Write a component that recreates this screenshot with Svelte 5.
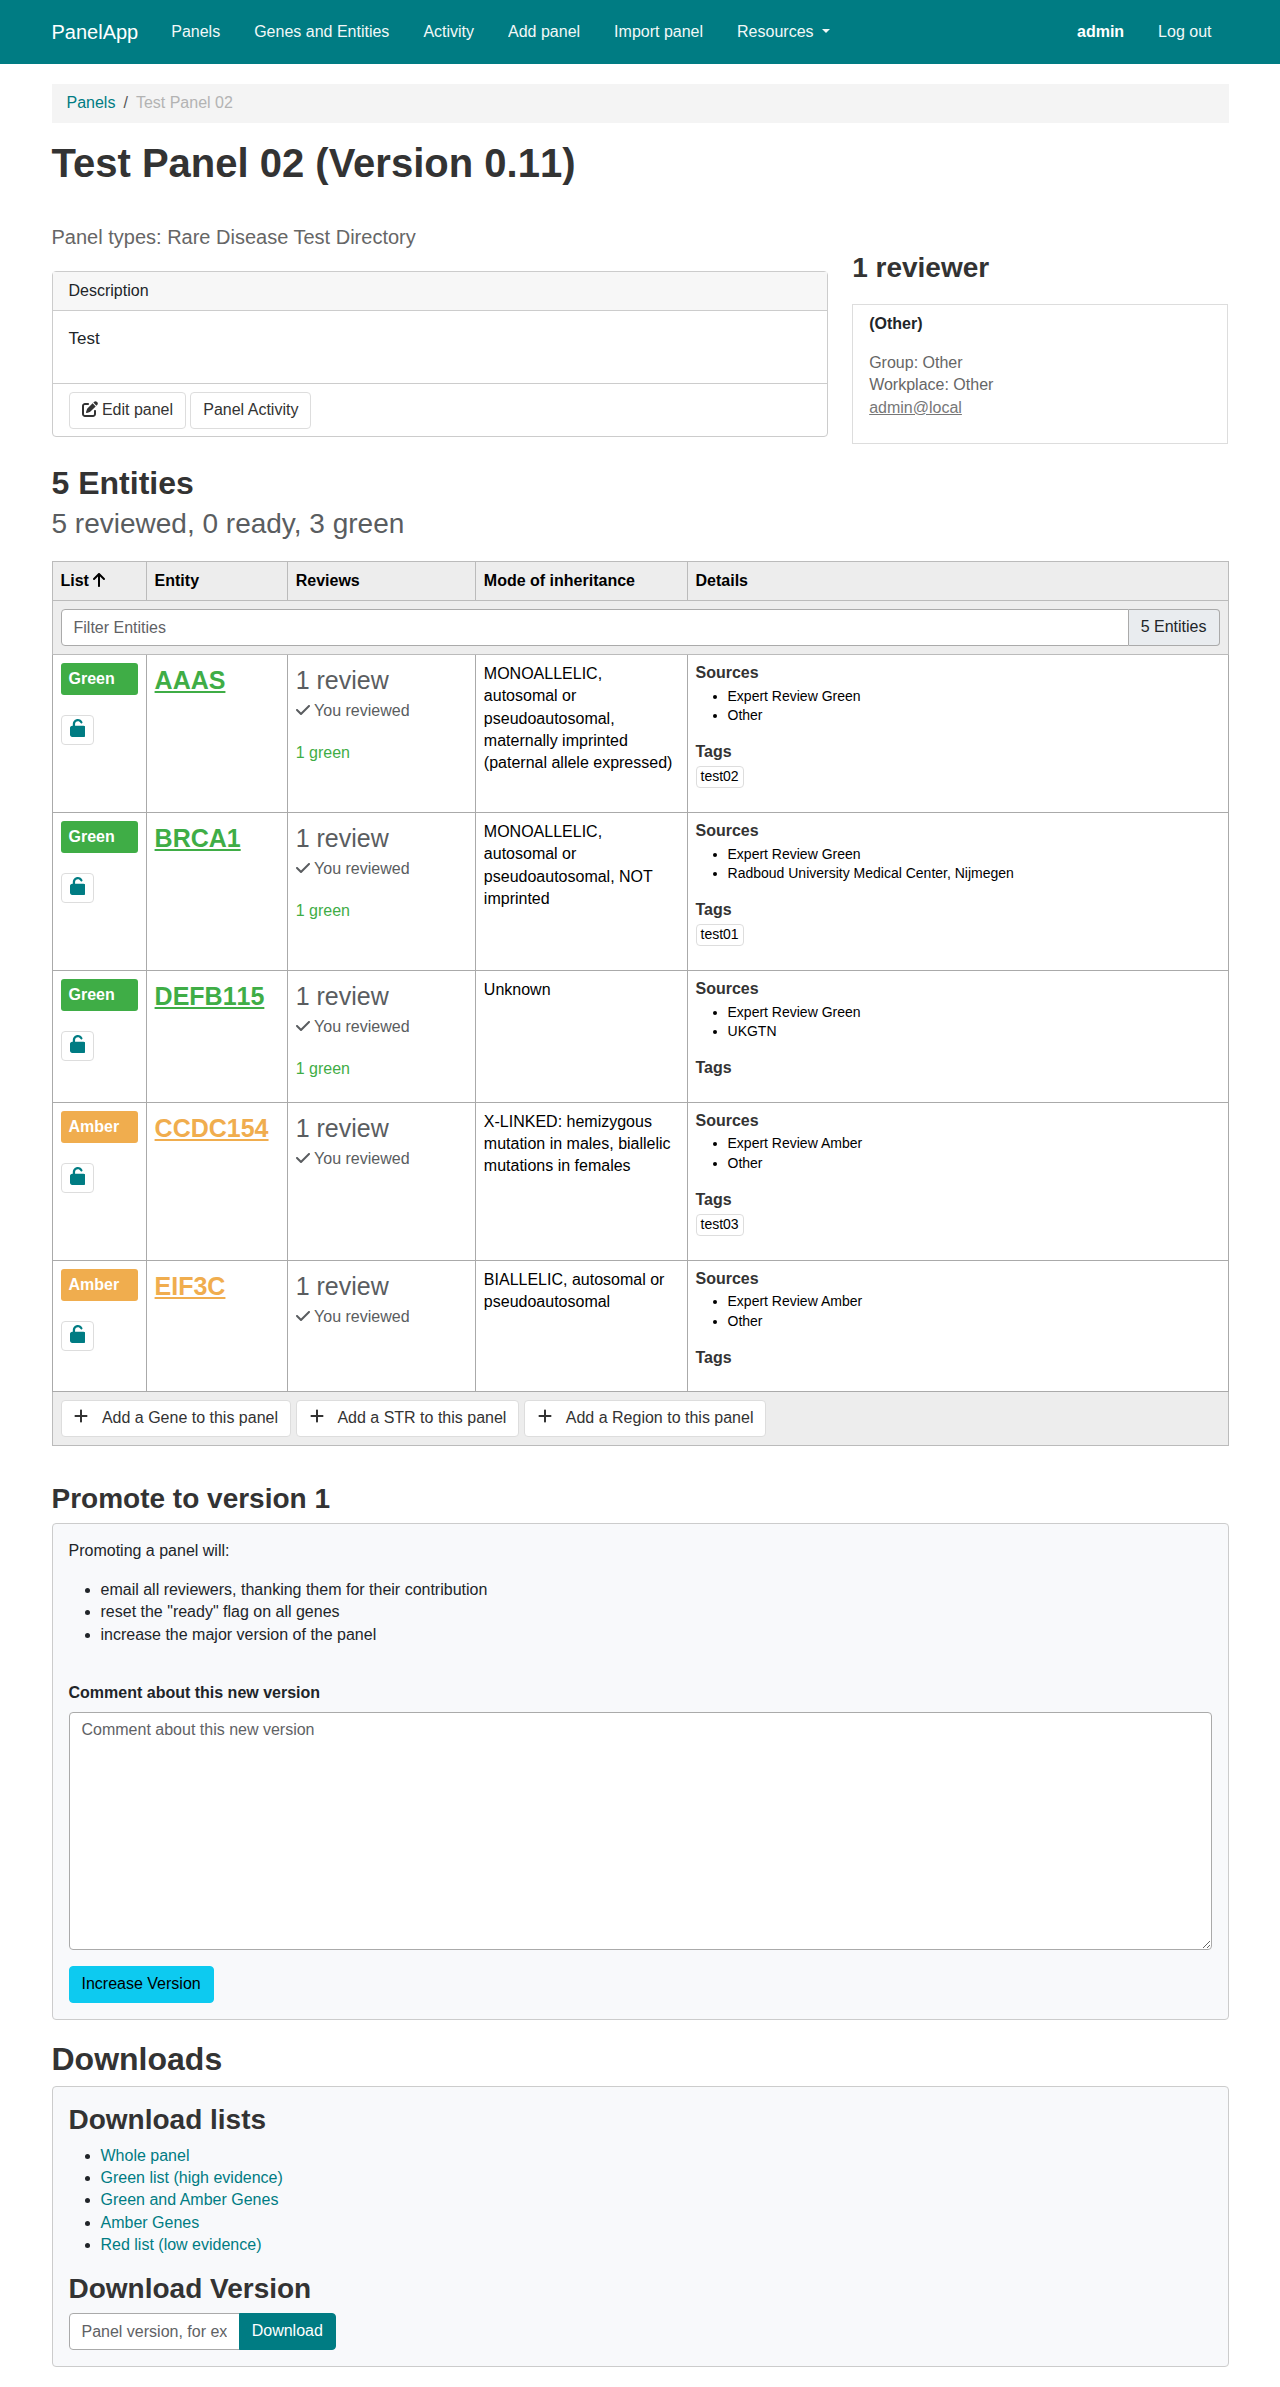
<script>
  const icons = {
    edit: {
      w: 512,
      d: 'M471.6 21.7c-21.9-21.9-57.3-21.9-79.2 0L362.3 51.7l97.9 97.9 30.1-30.1c21.9-21.9 21.9-57.3 0-79.2L471.6 21.7zm-299.2 220c-6.1 6.1-10.8 13.6-13.5 21.9l-29.6 88.8c-2.9 8.6-.6 18.1 5.8 24.6s15.9 8.7 24.6 5.8l88.8-29.6c8.2-2.7 15.7-7.4 21.9-13.5L437.7 172.3 339.7 74.3 172.4 241.7zM96 64C43 64 0 107 0 160V416c0 53 43 96 96 96H352c53 0 96-43 96-96V320c0-17.7-14.3-32-32-32s-32 14.3-32 32v96c0 17.7-14.3 32-32 32H96c-17.7 0-32-14.3-32-32V160c0-17.7 14.3-32 32-32h96c17.7 0 32-14.3 32-32s-14.3-32-32-32H96z',
    },
    unlock: {
      w: 448,
      d: 'M144 144c0-44.2 35.8-80 80-80c31.9 0 59.4 18.6 72.3 45.7c7.6 16 26.7 22.8 42.6 15.2s22.8-26.7 15.2-42.6C331 33.7 281.5 0 224 0C144.5 0 80 64.5 80 144v48H64c-35.3 0-64 28.7-64 64V448c0 35.3 28.7 64 64 64H384c35.3 0 64-28.7 64-64V256c0-35.3-28.7-64-64-64H144V144z',
    },
    up: {
      w: 384,
      d: 'M214.6 41.4c-12.5-12.5-32.8-12.5-45.3 0l-160 160c-12.5 12.5-12.5 32.8 0 45.3s32.8 12.5 45.3 0L160 141.2V448c0 17.7 14.3 32 32 32s32-14.3 32-32V141.2L329.4 246.6c12.5 12.5 32.8 12.5 45.3 0s12.5-32.8 0-45.3l-160-160z',
    },
    check: {
      w: 448,
      d: 'M438.6 105.4c12.5 12.5 12.5 32.8 0 45.3l-256 256c-12.5 12.5-32.8 12.5-45.3 0l-128-128c-12.5-12.5-12.5-32.8 0-45.3s32.8-12.5 45.3 0L160 338.7 393.4 105.4c12.5-12.5 32.8-12.5 45.3 0z',
    },
    plus: {
      w: 448,
      d: 'M256 80c0-17.7-14.3-32-32-32s-32 14.3-32 32V224H48c-17.7 0-32 14.3-32 32s14.3 32 32 32H192V432c0 17.7 14.3 32 32 32s32-14.3 32-32V288H400c17.7 0 32-14.3 32-32s-14.3-32-32-32H256V80z',
    },
  };

  const nav = ['Panels', 'Genes and Entities', 'Activity', 'Add panel', 'Import panel'];

  const entities = [
    { level: 'Green', name: 'AAAS', green: 1, mode: 'MONOALLELIC, autosomal or pseudoautosomal, maternally imprinted (paternal allele expressed)', sources: ['Expert Review Green', 'Other'], tags: ['test02'] },
    { level: 'Green', name: 'BRCA1', green: 1, mode: 'MONOALLELIC, autosomal or pseudoautosomal, NOT imprinted', sources: ['Expert Review Green', 'Radboud University Medical Center, Nijmegen'], tags: ['test01'] },
    { level: 'Green', name: 'DEFB115', green: 1, mode: 'Unknown', sources: ['Expert Review Green', 'UKGTN'], tags: [] },
    { level: 'Amber', name: 'CCDC154', green: 0, mode: 'X-LINKED: hemizygous mutation in males, biallelic mutations in females', sources: ['Expert Review Amber', 'Other'], tags: ['test03'] },
    { level: 'Amber', name: 'EIF3C', green: 0, mode: 'BIALLELIC, autosomal or pseudoautosomal', sources: ['Expert Review Amber', 'Other'], tags: [] },
  ];

  const addable = ['Gene', 'STR', 'Region'];
  const downloads = ['Whole panel', 'Green list (high evidence)', 'Green and Amber Genes', 'Amber Genes', 'Red list (low evidence)'];
</script>

{#snippet icon(name)}
  <svg class="icon {name}" viewBox="0 0 {icons[name].w} 512" aria-hidden="true"><path d={icons[name].d} /></svg>
{/snippet}

<nav class="navbar">
  <a class="brand" href="#top">PanelApp</a>
  {#each nav as item}<a class="link" href="#nav">{item}</a>{/each}
  <a class="link" href="#nav">Resources<span class="caret"></span></a>
  <a class="link user" href="#nav"><b>admin</b></a>
  <a class="link" href="#nav">Log out</a>
</nav>

<main class="container">
  <div class="breadcrumb">
    <a href="#panels">Panels</a><span class="sep">/</span><span class="current">Test Panel 02</span>
  </div>

  <h1>Test Panel 02 (Version <span class="digits">0.11</span>)</h1>

  <div class="overview">
    <div class="about">
      <p class="types">Panel types: Rare Disease Test Directory</p>
      <div class="card">
        <div class="card-header">Description</div>
        <div class="card-body"><p>Test</p></div>
        <div class="card-footer">
          <button class="btn edit-btn">{@render icon('edit')}Edit panel</button>
          <button class="btn">Panel Activity</button>
        </div>
      </div>
    </div>
    <aside class="reviewers">
      <h3>1 reviewer</h3>
      <div class="reviewer">
        <b>(Other)</b>
        <p>Group: Other<br />Workplace: Other<br /><a href="#mail">admin@local</a></p>
      </div>
    </aside>
  </div>

  <h2 class="entities-title">5 Entities</h2>
  <p class="summary">5 reviewed, 0 ready, 3 green</p>

  <table>
    <colgroup><col class="c1" /><col class="c2" /><col class="c3" /><col class="c4" /><col /></colgroup>
    <thead>
      <tr>
        <th>List {@render icon('up')}</th>
        <th>Entity</th>
        <th>Reviews</th>
        <th>Mode of inheritance</th>
        <th>Details</th>
      </tr>
      <tr>
        <td colspan="5">
          <div class="group">
            <input class="field" placeholder="Filter Entities" aria-label="Filter Entities" />
            <span class="addon">5 Entities</span>
          </div>
        </td>
      </tr>
    </thead>
    <tbody>
      {#each entities as e}
        <tr class:tagged={e.tags.length > 0}>
          <td>
            <span class="badge {e.level.toLowerCase()}">{e.level}</span>
            <button class="btn lock" aria-label="Unlock">{@render icon('unlock')}</button>
          </td>
          <td><a class="entity digits {e.level.toLowerCase()}" href="#entity">{e.name}</a></td>
          <td class="reviews">
            <div class="count">1 review</div>
            <div class="mine">{@render icon('check')}You reviewed</div>
            {#if e.green}<div class="votes">{e.green} green</div>{/if}
          </td>
          <td>{e.mode}</td>
          <td class="details">
            <h6>Sources</h6>
            <ul>{#each e.sources as s}<li>{s}</li>{/each}</ul>
            <h6>Tags</h6>
            {#each e.tags as t}<span class="tag">{t}</span>{/each}
          </td>
        </tr>
      {/each}
    </tbody>
    <tfoot>
      <tr>
        <td colspan="5">
          <div class="actions">
            {#each addable as kind}<button class="btn add">{@render icon('plus')}Add a {kind} to this panel</button>{/each}
          </div>
        </td>
      </tr>
    </tfoot>
  </table>

  <h3 class="promote-title">Promote to version 1</h3>
  <section class="well promote">
    <p>Promoting a panel will:</p>
    <ul>
      <li>email all reviewers, thanking them for their contribution</li>
      <li>reset the "ready" flag on all genes</li>
      <li>increase the major version of the panel</li>
    </ul>
    <label for="comment">Comment about this new version</label>
    <textarea id="comment" placeholder="Comment about this new version"></textarea>
    <button class="btn info">Increase Version</button>
  </section>

  <h2 class="downloads-title">Downloads</h2>
  <section class="well downloads">
    <h3>Download lists</h3>
    <ul>{#each downloads as d}<li><a href="#download">{d}</a></li>{/each}</ul>
    <h3>Download Version</h3>
    <div class="group version">
      <input class="field" placeholder="Panel version, for example" aria-label="Panel version" />
      <button class="btn primary">Download</button>
    </div>
  </section>
</main>

<style>
  :global(body) {
    margin: 0;
    background: #fff;
    color: #212529;
    font: 16px/1.4 "Liberation Sans", Arial, sans-serif;
  }
  :global(*) { box-sizing: border-box; }
  a { color: #007c83; text-decoration: none; }
  p, ul, h1, h2, h3, h6 { margin: 0; }
  h1, h2, h3, h6 { color: #333; line-height: 1.2; font-weight: 700; }
  h1 { font-size: 40px; margin-top: 16px; }
  h2 { font-size: 32px; }
  h3 { font-size: 28px; }
  h6 { font-size: 16px; }
  ul { padding-left: 32px; }
  button, input, textarea { font: inherit; margin: 0; }
  .digits { font-kerning: none; }

  .icon { height: 16px; fill: currentColor; vertical-align: -2px; }
  .icon.edit { width: 16px; margin-right: 4.4px; }
  .icon.up { width: 12px; }
  .icon.check { width: 14px; margin-right: 4.4px; }
  .icon.plus { width: 14px; margin: 0 13.9px 0 0.5px; vertical-align: -1px; }
  .icon.unlock { width: 15.75px; height: 18px; }

  .navbar {
    display: flex;
    align-items: center;
    height: 64px;
    padding: 0 51.5px;
    background: #007c83;
  }
  .navbar a { color: #fff; }
  .brand { font-size: 20px; margin-right: 16px; }
  .link { padding: 0 17px; opacity: 0.95; }
  .user { margin-left: auto; opacity: 1; }
  .caret {
    display: inline-block;
    margin-left: 8px;
    vertical-align: 4px;
    border: 4.5px solid transparent;
    border-top-color: #fff;
    border-bottom: 0;
  }

  .container { padding: 20px 51.5px; }
  .breadcrumb { height: 39px; padding: 7.5px 15px; background: #f4f4f4; }
  .sep { padding: 0 8px; color: #555; }
  .current { color: #b3b3b3; }

  .overview { display: flex; gap: 24px; margin-top: 36px; }
  .about { width: 776.67px; }
  .types { color: #666; font-size: 20px; line-height: 28px; }
  .card { margin-top: 20px; border: 1px solid #ccc; border-radius: 4px; }
  .card-header { padding: 8px 16px; background: #f7f7f7; border-bottom: 1px solid #ccc; }
  .card-body { padding: 16px; font-size: 17px; }
  .card-body p { margin-bottom: 16px; }
  .card-footer { display: flex; gap: 4.2px; padding: 8px 16px 7.2px; border-top: 1px solid #ccc; }

  .btn {
    padding: 6px 12px;
    border: 1px solid #ddd;
    border-radius: 4px;
    background: #fff;
    color: #333;
    white-space: nowrap;
  }

  .reviewers { flex: 0 0 375.8px; padding-top: 28px; }
  .reviewers h3 { line-height: 33.6px; }
  .reviewer { margin-top: 19.4px; height: 140px; padding: 8px 16px; border: 1px solid #ddd; }
  .reviewer b { display: block; }
  .reviewer p { margin-top: 16.6px; color: #666; }
  .reviewer a { color: #777; text-decoration: underline; }

  .entities-title { margin-top: 20px; }
  .summary { margin-top: 1.5px; color: #5a5d60; font-size: 28px; line-height: 39.2px; }

  table {
    width: 100%;
    margin-top: 18px;
    border-collapse: collapse;
    table-layout: fixed;
    color: #000;
  }
  .c1 { width: 8%; }
  .c2 { width: 12%; }
  .c3 { width: 16%; }
  .c4 { width: 18%; }
  th, td { padding: 8px; border: 1px solid #aaa; text-align: left; vertical-align: top; }
  thead th, thead td, tfoot td { background: #ededed; border-color: #bbb; }
  th { font-weight: 700; }
  tbody tr { height: 131.8px; }
  tbody tr.tagged { height: 158px; }

  .group { display: flex; }
  .field {
    flex: 1;
    min-width: 0;
    height: 36.4px;
    padding: 6px 12px;
    border: 1px solid #aaa;
    border-radius: 4px 0 0 4px;
    background: #fff;
  }
  .field::placeholder, textarea::placeholder { color: #5f6265; opacity: 1; }
  .addon {
    padding: 6px 12px;
    border: 1px solid #aaa;
    border-left: 0;
    border-radius: 0 4px 4px 0;
    background: #e9ecef;
    color: #212529;
    white-space: nowrap;
  }

  .badge {
    display: block;
    height: 32px;
    padding: 0 8px;
    border-radius: 3px;
    color: #fff;
    font-weight: 700;
    line-height: 31px;
  }
  .badge.green { background: #3fad46; }
  .badge.amber { background: #f0ad4e; }
  .lock {
    display: flex;
    justify-content: center;
    width: 33.75px;
    height: 30px;
    margin-top: 20px;
    padding: 3.5px 0 0;
    color: #007c83;
  }
  .entity { font-size: 25px; font-weight: 700; text-decoration: underline; line-height: 35px; }
  .entity.green, .votes { color: #3fad46; }
  .entity.amber { color: #f0ad4e; }
  .count { color: #5a5d60; font-size: 25px; line-height: 35px; }
  .mine { margin-top: 2.4px; color: #5a5d60; }
  .votes { margin-top: 19.8px; }
  .details ul { margin: 4.5px 0 16.3px; font-size: 14px; }
  .tag {
    display: inline-block;
    margin-top: 5px;
    padding: 0 4px;
    border: 1px solid #ddd;
    border-radius: 4px;
    font-size: 14px;
    vertical-align: top;
  }
  .actions { display: flex; gap: 5px; }

  .well { padding: 16px; border: 1px solid #ccc; border-radius: 4px; background: #f8f9fb; }
  .promote-title { margin-top: 36px; }
  .promote { margin-top: 8px; height: 497px; }
  .promote ul { margin: 16px 0 36px; }
  label { display: block; margin-bottom: 8px; font-weight: 700; }
  textarea {
    display: block;
    width: 100%;
    height: 238px;
    padding: 6px 12px;
    border: 1px solid #aaa;
    border-radius: 4px;
    background: #fff;
    resize: vertical;
  }
  .btn.info { margin-top: 16px; background: #0dcaf0; border-color: #0dcaf0; color: #000; }

  .downloads-title { margin-top: 19.5px; }
  .downloads { margin-top: 8px; height: 281px; }
  .downloads ul { margin: 7.6px 0 15.4px; }
  .version { width: 267.5px; margin-top: 8px; }
  .version .field { flex: 0 0 171px; }
  .btn.primary {
    flex: 1;
    margin-left: -1px;
    background: #007c83;
    border-color: #007c83;
    border-radius: 0 4px 4px 0;
    color: #fff;
  }
</style>
